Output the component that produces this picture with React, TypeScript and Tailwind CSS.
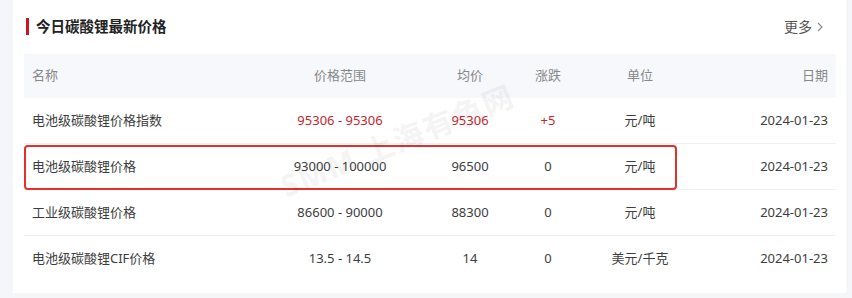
import React from "react";

const rows = [
  { name: "电池级碳酸锂价格指数", range: "95306 - 95306", avg: "95306", chg: "+5", unit: "元/吨", date: "2024-01-23", red: true },
  { name: "电池级碳酸锂价格", range: "93000 - 100000", avg: "96500", chg: "0", unit: "元/吨", date: "2024-01-23", box: true },
  { name: "工业级碳酸锂价格", range: "86600 - 90000", avg: "88300", chg: "0", unit: "元/吨", date: "2024-01-23" },
  { name: "电池级碳酸锂CIF价格", range: "13.5 - 14.5", avg: "14", chg: "0", unit: "美元/千克", date: "2024-01-23" },
];

const grid = "grid grid-cols-[236px_160px_100px_56px_128px_1fr] items-center";

export default function App() {
  return (
    <div
      className="w-[852px] h-[298px] bg-[#f4f6f9] pl-[13px] pr-[6px] overflow-hidden"
      style={{ fontFamily: '"Noto Sans", "Noto Sans CJK SC", sans-serif' }}
    >
      <div className="relative bg-white h-[293px] px-[11px] pr-[10px]">
        <div className="flex items-center justify-between h-[54px] pb-[1px]">
          <div className="flex items-center">
            <div className="w-[3px] h-[17px] bg-[#c8161e] ml-[2px] mr-[7px]" />
            <span className="text-[14.5px] font-bold text-[#222] tracking-[0px]">今日碳酸锂最新价格</span>
          </div>
          <div className="flex items-center text-[14px] text-[#555] mr-[12px]">
            <span>更多</span>
            <svg width="8" height="12" viewBox="0 0 8 12" className="ml-[4px]">
              <path d="M2 2 L6 6 L2 10" fill="none" stroke="#888" strokeWidth="1.1" />
            </svg>
          </div>
        </div>

        <div className={`${grid} h-[44px] bg-[#f6f8fc] text-[13px] text-[#888]`}>
          <div className="pl-[8px]">名称</div>
          <div className="text-center">价格范围</div>
          <div className="text-center">均价</div>
          <div className="text-center">涨跌</div>
          <div className="text-center">单位</div>
          <div className="text-right pr-[8px]">日期</div>
        </div>

        {rows.map((r, i) => (
          <div
            key={i}
            className={`relative ${grid} h-[46px] text-[13px] text-[#3d3d3d] ${i < rows.length - 1 ? "border-b border-[#eef0f4]" : ""}`}
          >
            <div className="pl-[8px]">{r.name}</div>
            <div className={`text-center ${r.red ? "text-[#c4262c]" : ""}`}>{r.range}</div>
            <div className={`text-center ${r.red ? "text-[#c4262c]" : ""}`}>{r.avg}</div>
            <div className={`text-center ${r.red ? "text-[#c4262c]" : ""}`}>{r.chg}</div>
            <div className="text-center">{r.unit}</div>
            <div className="text-right pr-[8px]">{r.date}</div>
            {r.box && (
              <div className="absolute left-0 top-[1px] w-[653px] h-[45px] border-2 border-[#e3302b] rounded-[4px] pointer-events-none" />
            )}
          </div>
        ))}

        <div className="absolute left-[260px] top-[118px] -rotate-[22deg] text-[30px] font-bold text-[#000] opacity-[0.04] whitespace-nowrap pointer-events-none select-none tracking-[2px]">
          SMM 上海有色网
        </div>
      </div>
    </div>
  );
}
